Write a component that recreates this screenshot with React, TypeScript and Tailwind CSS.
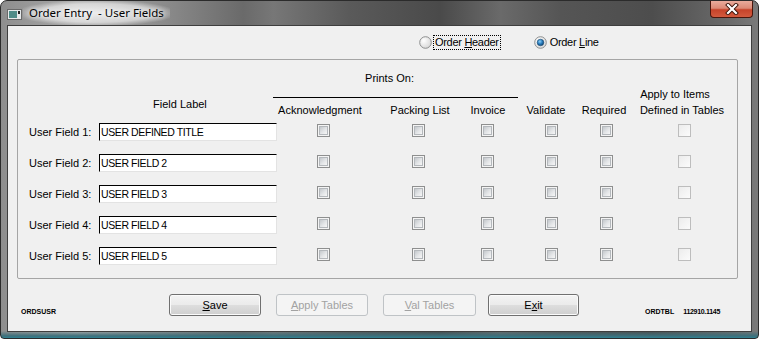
import React from "react";

const COLS = "grid grid-cols-[70px_178px_92px_98px_40px_88px_22px_134px]";

function CheckBox({ light }: { light?: boolean }) {
  if (light) {
    return (
      <div className="w-[13px] h-[13px] border border-[#bdbdbd] bg-[linear-gradient(135deg,#ececec_0%,#fbfbfb_100%)]" />
    );
  }
  return (
    <div className="w-[13px] h-[13px] border border-[#8e8f8f] bg-[#f4f4f4] p-[1px]">
      <div className="w-full h-full border border-[#b4b8bc] bg-[linear-gradient(135deg,#c4c8cc_0%,#e4e6e8_55%,#f6f6f6_100%)]" />
    </div>
  );
}

function Radio({ checked }: { checked?: boolean }) {
  return (
    <svg width="13" height="13" viewBox="0 0 13 13">
      <defs>
        <radialGradient id="rbg" cx="0.35" cy="0.35" r="0.8">
          <stop offset="0" stopColor="#ffffff" />
          <stop offset="1" stopColor="#d2d2d2" />
        </radialGradient>
        <radialGradient id="rdot" cx="0.4" cy="0.35" r="0.7">
          <stop offset="0" stopColor="#8fd0f8" />
          <stop offset="0.5" stopColor="#2a7fc0" />
          <stop offset="1" stopColor="#0d3f6b" />
        </radialGradient>
      </defs>
      <circle cx="6.5" cy="6.5" r="5.8" fill="url(#rbg)" stroke="#8e8f8f" strokeWidth="1" />
      {checked && <circle cx="6.5" cy="6.5" r="3.3" fill="url(#rdot)" stroke="#1b4a72" strokeWidth="0.6" />}
    </svg>
  );
}

function Btn({
  children,
  disabled,
  className,
}: {
  children: React.ReactNode;
  disabled?: boolean;
  className?: string;
}) {
  const base = "h-[22px] rounded-[3px] border flex items-center justify-center text-[11px] leading-[13px] ";
  const look = disabled
    ? "border-[#bfc3c6] bg-[#f4f4f4] text-[#a2a2a2]"
    : "border-[#707070] bg-[linear-gradient(180deg,#f3f3f3_0%,#ebebeb_48%,#dddddd_52%,#cfcfcf_100%)] shadow-[inset_0_0_0_1px_#fbfbfb] text-black";
  return <div className={base + look + " " + (className ?? "")}>{children}</div>;
}

const rows = ["USER DEFINED TITLE", "USER FIELD 2", "USER FIELD 3", "USER FIELD 4", "USER FIELD 5"];

export default function App() {
  return (
    <div className="w-[759px] h-[339px] flex flex-col rounded-t-[7px] rounded-b-[4px] border border-[#2b2b2b] overflow-hidden font-['Liberation_Sans',Arial,sans-serif] bg-[image:linear-gradient(0deg,#2f8596_0px,#3d6f7a_2px,rgba(60,60,60,0)_7px),linear-gradient(90deg,#8e8e8e_0%,#a9a9a9_10%,#8a8a8a_22%,#6a6a6a_32%,#777777_36%,#5a5a5a_46%,#4a4a4a_58%,#6a6a6a_66%,#555555_74%,#4d4d4d_86%,#6a6a6a_96%,#7a7a7a_100%)]">
      {/* Title bar */}
      <div className="h-[24px] flex items-start shrink-0">
        <div className="pl-[6px] pt-[8px]">
          <svg width="15" height="11" viewBox="0 0 15 11">
            <rect x="0.5" y="0.5" width="14" height="10" fill="#e6e9ea" stroke="#6a6a6a" />
            <rect x="2" y="2" width="8" height="7" fill="#4f8c88" />
            <rect x="11" y="2" width="2" height="3" fill="#222" />
          </svg>
        </div>
        <div className="ml-[1px] h-[24px] px-[6px] flex items-center bg-[radial-gradient(ellipse_at_center,rgba(255,255,255,0.8)_0%,rgba(255,255,255,0.55)_55%,rgba(255,255,255,0)_78%)]">
          <span className="whitespace-pre text-[11.5px] text-black font-['Noto_Sans',sans-serif] leading-[16px] [text-shadow:0_0_5px_#fff]">
            {"Order Entry  - User Fields"}
          </span>
        </div>
        <div className="ml-auto mr-[5px] w-[43px] h-[17px] rounded-b-[4px] border border-t-0 border-[#4a160c] bg-[linear-gradient(180deg,#e9ab9c_0%,#dc8a76_45%,#c6432a_55%,#d35a3e_100%)] flex items-center justify-center">
          <svg width="14" height="12" viewBox="0 0 14 12">
            <path d="M3 2 L11 10 M11 2 L3 10" stroke="#3a1208" strokeWidth="4" strokeLinecap="square" />
            <path d="M3 2 L11 10 M11 2 L3 10" stroke="#ffffff" strokeWidth="2.2" strokeLinecap="square" />
          </svg>
        </div>
      </div>

      {/* Client */}
      <div className="flex-1 mx-[6px] mb-[6px] border border-[#3e3e3e] bg-[#f0f0f0] flex flex-col text-[11px] text-black">
        {/* radio row */}
        <div className="h-[33px] flex items-center pl-[411px]">
          <Radio />
          <span className="ml-[1px] px-[1px] border border-dotted border-black leading-[13px] tracking-[-0.3px]">
            Order <u>H</u>eader
          </span>
          <div className="ml-[33px]">
            <Radio checked />
          </div>
          <span className="ml-[3px] leading-[13px] tracking-[-0.3px]">
            Order <u>L</u>ine
          </span>
        </div>

        {/* group box */}
        <div className="ml-[9px] w-[721px] h-[220px] border border-[#a5a5a5] rounded-[2px]">
          <div className={COLS + " grid-rows-[38px_25px] pl-[11px]"}>
            <div className="col-start-3 col-span-3 row-start-1 flex flex-col">
              <div className="flex-1 flex items-center justify-center pr-[5px] leading-[13px]">Prints On:</div>
              <div className="h-px bg-black ml-[-4px] w-[245px]" />
            </div>
            <div className="col-start-2 row-start-2 pl-[54px] leading-[13px] whitespace-nowrap">Field Label</div>
            <div className="col-start-3 row-start-2 pt-[6px] flex justify-center pr-[6px] leading-[13px] whitespace-nowrap">Acknowledgment</div>
            <div className="col-start-4 row-start-2 pt-[6px] flex justify-center pl-[4px] leading-[13px] whitespace-nowrap">Packing List</div>
            <div className="col-start-5 row-start-2 pt-[6px] flex justify-center pl-[2px] leading-[13px] whitespace-nowrap">Invoice</div>
            <div className="col-start-6 row-start-2 pt-[6px] flex justify-center pr-[10px] leading-[13px] whitespace-nowrap">Validate</div>
            <div className="col-start-7 row-start-2 pt-[6px] flex justify-center pr-[4px] leading-[13px] whitespace-nowrap">Required</div>
            <div className="col-start-8 row-start-1 row-span-2 flex flex-col justify-end items-center pb-[5px] pr-[4px] leading-[16px] whitespace-nowrap">
              <div className="pr-[14px]">Apply to Items</div>
              <div>Defined in Tables</div>
            </div>
          </div>
          {rows.map((r, i) => (
            <div key={i} className={COLS + " h-[31px] pl-[11px] items-start"}>
              <div className="leading-[18px] whitespace-nowrap">User Field {i + 1}:</div>
              <div className="h-[18px] bg-white border border-black border-r-[#e3e3e3] border-b-[#e3e3e3] pl-[1px] leading-[16px] text-[10.5px] tracking-[-0.4px] whitespace-nowrap overflow-hidden">
                {r}
              </div>
              <div className="flex justify-center pt-[1px]"><CheckBox /></div>
              <div className="flex justify-center pt-[1px]"><CheckBox /></div>
              <div className="flex justify-center pt-[1px]"><CheckBox /></div>
              <div className="flex justify-center pt-[1px]"><CheckBox /></div>
              <div className="flex justify-center pt-[1px]"><CheckBox /></div>
              <div className="flex justify-center pt-[1px]"><CheckBox light /></div>
            </div>
          ))}
        </div>

        {/* bottom row */}
        <div className="flex-1 flex items-start">
          <div className="w-[161px] pl-[13px] pt-[28px] text-[7px] leading-[9px] font-bold">ORDSUSR</div>
          <div className="pt-[15px] flex">
            <Btn className="w-[92px]"><span><u>S</u>ave</span></Btn>
            <Btn disabled className="w-[92px] ml-[15px]"><span><u>A</u>pply Tables</span></Btn>
            <Btn disabled className="w-[93px] ml-[15px]"><span><u>V</u>al Tables</span></Btn>
            <Btn className="w-[91px] ml-[12px]"><span>E<u>x</u>it</span></Btn>
          </div>
          <div className="pt-[28px] ml-[66px] text-[7px] leading-[9px] font-bold flex">
            <span>ORDTBL</span>
            <span className="ml-[9px] tracking-[-0.3px]">112910.1145</span>
          </div>
        </div>
      </div>
    </div>
  );
}
